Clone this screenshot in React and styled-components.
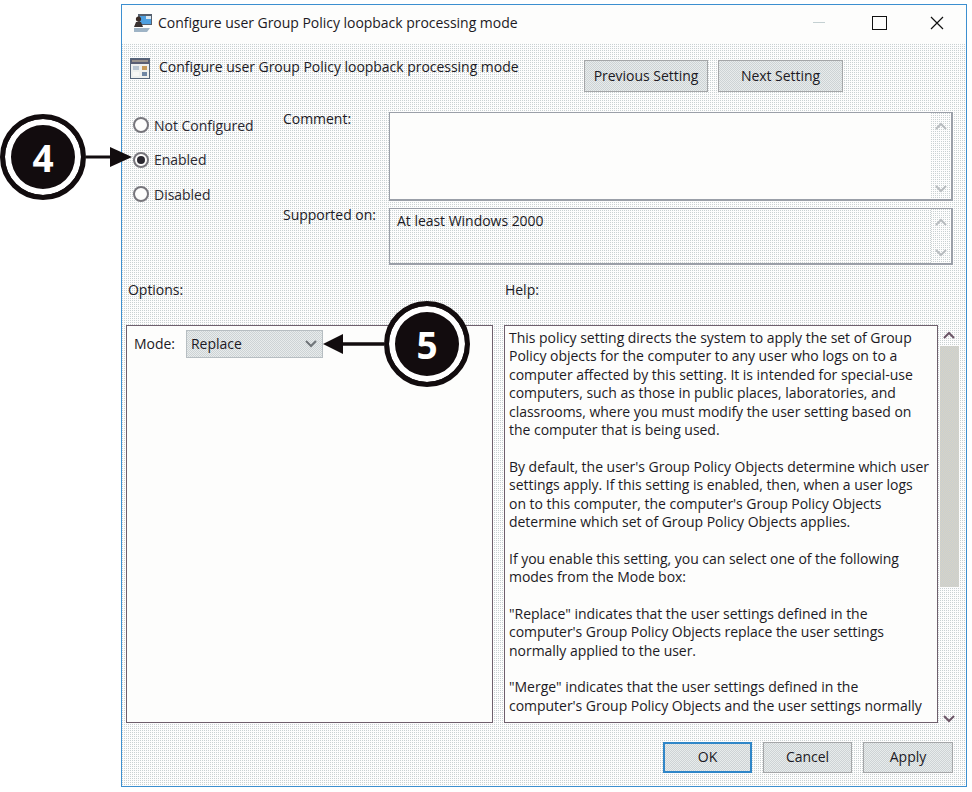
import React from "react";
import styled, { createGlobalStyle } from "styled-components";

const helpLines = [
  "This policy setting directs the system to apply the set of Group",
  "Policy objects for the computer to any user who logs on to a",
  "computer affected by this setting. It is intended for special-use",
  "computers, such as those in public places, laboratories, and",
  "classrooms, where you must modify the user setting based on",
  "the computer that is being used.",
  "",
  "By default, the user's Group Policy Objects determine which user",
  "settings apply. If this setting is enabled, then, when a user logs",
  "on to this computer, the computer's Group Policy Objects",
  "determine which set of Group Policy Objects applies.",
  "",
  "If you enable this setting, you can select one of the following",
  "modes from the Mode box:",
  "",
  "\"Replace\" indicates that the user settings defined in the",
  "computer's Group Policy Objects replace the user settings",
  "normally applied to the user.",
  "",
  "\"Merge\" indicates that the user settings defined in the",
  "computer's Group Policy Objects and the user settings normally",
];

const Chevron = ({ up, color = "#b9bdc0" }) => (
  <svg width="12" height="8" viewBox="0 0 12 8">
    <path d={up ? "M1 7 L6 2 L11 7" : "M1 1 L6 6 L11 1"} fill="none" stroke={color} strokeWidth="2" />
  </svg>
);

const App = () => {
  return (
    <Page>
      <GlobalStyle />
      <Window>
        <TitleBar>
          <svg width="20" height="20" viewBox="0 0 20 20">
            <rect x="5" y="1" width="14" height="11" fill="#56606e" />
            <rect x="7" y="3" width="11" height="8" fill="#4d9fe0" />
            <rect x="13" y="3" width="5" height="3" fill="#dbe9f3" />
            <circle cx="5.5" cy="6" r="2.6" fill="#3b2b25" />
            <path d="M1 14 L3 9 L8 9 L10 14 Z" fill="#3a3230" />
            <path d="M1 15 L17 15 L14 19 L1 19 Z" fill="#9fb4c6" />
          </svg>
          <TitleText>Configure user Group Policy loopback processing mode</TitleText>
          <WindowControls>
            <MinimizeMark />
            <MaximizeMark />
            <svg width="14" height="14" viewBox="0 0 14 14">
              <path d="M1 1 L13 13 M13 1 L1 13" stroke="#111" strokeWidth="1.2" />
            </svg>
          </WindowControls>
        </TitleBar>
        <Body>
          <HeaderRow>
            <svg width="20" height="21" viewBox="0 0 20 21">
              <rect x="0.5" y="0.5" width="19" height="20" fill="#eef0ee" stroke="#55657a" />
              <rect x="1" y="1" width="18" height="5" fill="#5a5f74" />
              <rect x="2" y="2.5" width="16" height="1" fill="#d9c9a5" />
              <rect x="3" y="8" width="6" height="4" fill="#b9c6d2" />
              <rect x="12" y="8" width="5" height="4" fill="#c79b5a" />
              <rect x="3" y="14" width="6" height="4" fill="#f7f7f5" />
              <rect x="12" y="14" width="5" height="4" fill="#6f86a3" />
            </svg>
            <HeaderTitle>Configure user Group Policy loopback processing mode</HeaderTitle>
            <NavButtons>
              <DialogButton $width={124} $height={32}>Previous Setting</DialogButton>
              <DialogButton $width={125} $height={32}>Next Setting</DialogButton>
            </NavButtons>
          </HeaderRow>
          <SettingsRow>
            <RadioColumn>
              <RadioRow><Radio /><span>Not Configured</span></RadioRow>
              <RadioRow><Radio $checked /><span>Enabled</span></RadioRow>
              <RadioRow><Radio /><span>Disabled</span></RadioRow>
            </RadioColumn>
            <FieldColumn>
              <FieldRow $height={89}>
                <FieldLabel>Comment:</FieldLabel>
                <TextBox $white>
                  <BoxScroll>
                    <Chevron up />
                    <Chevron />
                  </BoxScroll>
                </TextBox>
              </FieldRow>
              <FieldRow $height={57}>
                <FieldLabel>Supported on:</FieldLabel>
                <TextBox>
                  <BoxText>At least Windows 2000</BoxText>
                  <BoxScroll>
                    <Chevron up />
                    <Chevron />
                  </BoxScroll>
                </TextBox>
              </FieldRow>
            </FieldColumn>
          </SettingsRow>
          <LabelsRow>
            <SectionLabel $width={377}>Options:</SectionLabel>
            <SectionLabel>Help:</SectionLabel>
          </LabelsRow>
          <PanelsRow>
            <OptionsPanel>
              <span>Mode:</span>
              <ModeSelect>
                Replace
                <Chevron color="#6f7478" />
              </ModeSelect>
            </OptionsPanel>
            <HelpPanel>
              {helpLines.map((line, i) => (
                <HelpLine key={i}>{line}</HelpLine>
              ))}
            </HelpPanel>
            <HelpScroll>
              <Chevron up color="#6b5566" />
              <ScrollThumb />
              <Chevron color="#6b5566" />
            </HelpScroll>
          </PanelsRow>
          <FooterRow>
            <DialogButton $width={89} $height={31} $primary>OK</DialogButton>
            <DialogButton $width={89} $height={31}>Cancel</DialogButton>
            <DialogButton $width={90} $height={31}>Apply</DialogButton>
          </FooterRow>
        </Body>
      </Window>

      <Callout $x={0} $y={114}>
        <Badge>4</Badge>
        <svg width="46" height="20" viewBox="0 0 46 20">
          <path d="M0 10 L26 10" stroke="#120c0e" strokeWidth="3" />
          <path d="M24 0 L46 10 L24 20 Z" fill="#120c0e" />
        </svg>
      </Callout>
      <Callout $x={323} $y={301} $reverse>
        <Badge>5</Badge>
        <svg width="61" height="20" viewBox="0 0 61 20">
          <path d="M18 10 L61 10" stroke="#120c0e" strokeWidth="3.5" />
          <path d="M20 0 L0 10 L20 20 Z" fill="#120c0e" />
        </svg>
      </Callout>
    </Page>
  );
};

export default App;
//
const GlobalStyle = createGlobalStyle`
  html, body {
    margin: 0;
    padding: 0;
    background: #fff;
  }
  body {
    font-family: "Open Sans", "Noto Sans", sans-serif;
    font-size: 14px;
    letter-spacing: -0.03px;
    color: #1c1a24;
  }
`;
const Page = styled.div`
  position: relative;
  width: 972px;
  height: 792px;
  padding: 4px 0 0 121px;
  box-sizing: border-box;
  overflow: hidden;
`;
const Window = styled.div`
  width: 846px;
  height: 783px;
  box-sizing: border-box;
  border: 1px solid #3c8fd0;
  display: flex;
  flex-direction: column;
  background: #fdfdfc;
`;
const TitleBar = styled.div`
  height: 39px;
  flex: none;
  display: flex;
  align-items: center;
  padding: 0 22px 4px 11px;
  box-sizing: border-box;
  background: #fdfdfc;
`;
const TitleText = styled.span`
  margin-left: 5px;
`;
const WindowControls = styled.div`
  margin-left: auto;
  display: flex;
  align-items: center;
`;
const MinimizeMark = styled.div`
  width: 12px;
  height: 1px;
  background: #c4d0d2;
  margin-right: 47px;
`;
const MaximizeMark = styled.div`
  width: 13px;
  height: 12px;
  border: 1px solid #111;
  margin-right: 43px;
`;
const Body = styled.div`
  flex: 1;
  display: flex;
  flex-direction: column;
  min-height: 0;
  background-color: #f1f3f3;
  background-image: conic-gradient(#fdfdfd 75%, #c9d1d2 0);
  background-size: 2px 2px;
`;
const HeaderRow = styled.div`
  height: 68px;
  flex: none;
  box-sizing: border-box;
  display: flex;
  align-items: flex-start;
  padding: 14px 123px 0 8px;
`;
const HeaderTitle = styled.span`
  margin: -1px 0 0 9px;
`;
const NavButtons = styled.div`
  display: flex;
  gap: 10px;
  margin: 2px 0 0 auto;
`;
const DialogButton = styled.button`
  width: ${(p) => p.$width}px;
  height: ${(p) => p.$height}px;
  box-sizing: border-box;
  padding: 0 0 2px;
  font: inherit;
  letter-spacing: inherit;
  color: inherit;
  background-color: #dadfe0;
  background-image: conic-gradient(#e8ecec 25%, #cdd3d5 0 50%, #e8ecec 0 75%, #cdd3d5 0);
  background-size: 2px 2px;
  border: ${(p) => (p.$primary ? "2px solid #2f86c8" : "1px solid #a4a6a8")};
`;
const SettingsRow = styled.div`
  flex: none;
  display: flex;
  height: 162px;
`;
const RadioColumn = styled.div`
  width: 161px;
  flex: none;
  box-sizing: border-box;
  padding: 3px 0 0 11px;
  display: flex;
  flex-direction: column;
  gap: 14.5px;
`;
const RadioRow = styled.div`
  display: flex;
  align-items: center;
  gap: 5px;
  height: 20px;
  color: #2a2830;
`;
const Radio = styled.span`
  width: 16px;
  height: 16px;
  box-sizing: border-box;
  border-radius: 50%;
  border: 2px solid #77767c;
  background: #fdfdfc;
  display: flex;
  align-items: center;
  justify-content: center;
  &::after {
    content: "";
    width: 8px;
    height: 8px;
    border-radius: 50%;
    background: ${(p) => (p.$checked ? "#2a2830" : "transparent")};
  }
`;
const FieldColumn = styled.div`
  flex: 1;
  display: flex;
  flex-direction: column;
  gap: 7px;
`;
const FieldRow = styled.div`
  height: ${(p) => p.$height}px;
  display: flex;
`;
const FieldLabel = styled.span`
  width: 106px;
  flex: none;
  line-height: 19px;
  margin-top: -3px;
`;
const TextBox = styled.div`
  width: 564px;
  box-sizing: border-box;
  border: 1px solid #9a9fa8;
  border-width: 1px 2px 2px 1px;
  display: flex;
  justify-content: space-between;
  background: ${(p) => (p.$white ? "#fdfdfc" : "transparent")};
`;
const BoxText = styled.span`
  padding: 2px 0 0 7px;
  line-height: 19px;
`;
const BoxScroll = styled.div`
  width: 20px;
  margin-left: auto;
  display: flex;
  flex-direction: column;
  align-items: center;
  justify-content: space-between;
  padding: 9px 0 6px;
  background-color: #f1f3f3;
  background-image: conic-gradient(#fdfdfd 75%, #c9d1d2 0);
  background-size: 2px 2px;
`;
const LabelsRow = styled.div`
  flex: none;
  display: flex;
  height: 50px;
  padding-left: 6px;
  margin-top: 1px;
`;
const SectionLabel = styled.span`
  width: ${(p) => (p.$width ? `${p.$width}px` : "auto")};
  line-height: 19px;
  margin-top: 5px;
`;
const PanelsRow = styled.div`
  flex: none;
  display: flex;
  height: 398px;
  padding-left: 4px;
`;
const OptionsPanel = styled.div`
  width: 367px;
  box-sizing: border-box;
  border: 1px solid #6e5f6c;
  background: #fdfdfc;
  display: flex;
  align-items: flex-start;
  padding: 4px 0 0 7px;
  gap: 11px;
  line-height: 28px;
`;
const ModeSelect = styled.div`
  width: 137px;
  height: 28px;
  box-sizing: border-box;
  display: flex;
  align-items: center;
  justify-content: space-between;
  padding: 0 5px 0 4px;
  border: 1px solid #b7bec2;
  background-color: #dadfe0;
  background-image: conic-gradient(#e8ecec 25%, #cdd3d5 0 50%, #e8ecec 0 75%, #cdd3d5 0);
  background-size: 2px 2px;
`;
const HelpPanel = styled.div`
  width: 434px;
  box-sizing: border-box;
  margin-left: 11px;
  border: 1px solid #6e5f6c;
  background: #fdfdfc;
  padding: 3px 0 0 4px;
  overflow: hidden;
`;
const HelpLine = styled.div`
  height: 18.4px;
  line-height: 18.4px;
  white-space: nowrap;
`;
const HelpScroll = styled.div`
  width: 20px;
  margin-left: 1px;
  display: flex;
  flex-direction: column;
  align-items: center;
  padding-top: 6px;
  box-sizing: border-box;
  height: 398px;
`;
const ScrollThumb = styled.div`
  width: 19px;
  height: 241px;
  margin: 7px 0 auto;
  background-color: #ccd1d1;
  background-image: conic-gradient(#c7cfd2 25%, #d9d3c4 0 50%, #c7cfd2 0 75%, #d9d3c4 0);
  background-size: 2px 2px;
`;
const FooterRow = styled.div`
  flex: none;
  display: flex;
  gap: 11px;
  padding: 19px 0 0 541px;
`;
const Callout = styled.div`
  position: absolute;
  left: ${(p) => p.$x}px;
  top: ${(p) => p.$y}px;
  display: flex;
  align-items: center;
  flex-direction: ${(p) => (p.$reverse ? "row-reverse" : "row")};
`;
const Badge = styled.div`
  width: 86px;
  height: 86px;
  box-sizing: border-box;
  flex: none;
  border-radius: 50%;
  background: #120c0e;
  border: 5px solid #120c0e;
  box-shadow: inset 0 0 0 6px #fff;
  color: #fff;
  display: flex;
  align-items: center;
  justify-content: center;
  font-family: "Open Sans", sans-serif;
  font-weight: 700;
  font-size: 37px;
`;
